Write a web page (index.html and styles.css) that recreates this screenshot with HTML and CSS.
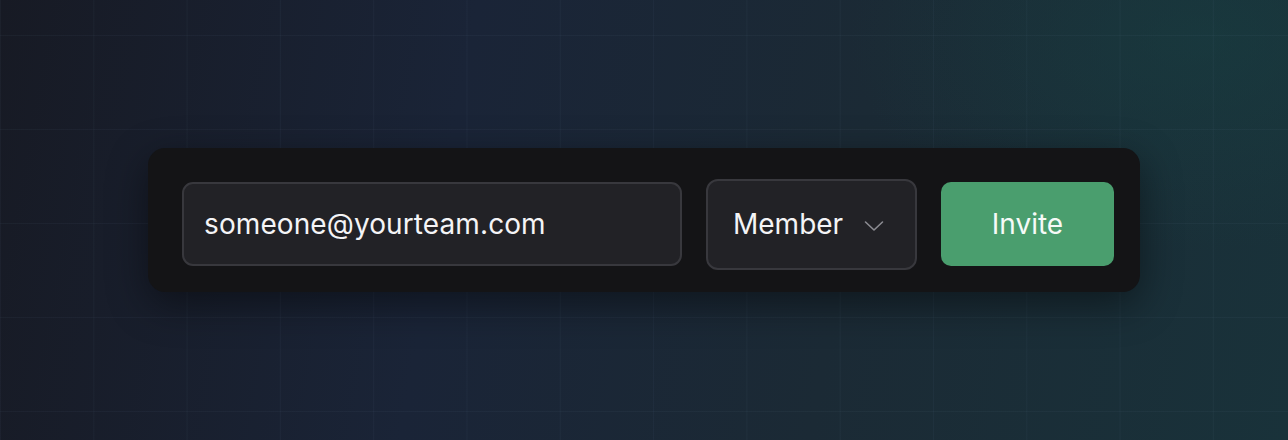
FILE: index.html
```html
<!DOCTYPE html>
<html>
<head>
<meta charset="utf-8">
<link rel="stylesheet" href="styles.css">
</head>
<body>
<div class="stage">
  <form class="card">
    <div class="field">someone@yourteam.com</div>
    <div class="select">
      <span>Member</span>
      <svg class="chev" width="20" height="12" viewBox="0 0 20 12"><path d="M1.5 2 L10 10 L18.5 2" fill="none" stroke="#8c8c92" stroke-width="1.6" stroke-linecap="round" stroke-linejoin="round"/></svg>
    </div>
    <div class="btn">Invite</div>
  </form>
</div>
</body>
</html>
```

FILE: styles.css
```css
html, body {
  margin: 0;
  padding: 0;
  width: 1288px;
  height: 440px;
  overflow: hidden;
}
body {
  font-family: Inter, "Noto Sans", sans-serif;
}
.stage {
  width: 1288px;
  height: 440px;
  box-sizing: border-box;
  padding-top: 148px;
  padding-left: 148px;
  background:
    linear-gradient(rgba(120,150,180,0.055) 1px, transparent 1px) 0 35px / 93px 94px,
    linear-gradient(90deg, rgba(120,150,180,0.055) 1px, transparent 1px) 0 0 / 93.3px 94px,
    radial-gradient(ellipse 500px 300px at 1200px 40px, rgba(24,64,66,0.5), transparent 70%),
    linear-gradient(100deg, #171a24 0%, #1a2437 35%, #1b2a35 65%, #19323a 100%);
}
.card {
  width: 992px;
  height: 144px;
  box-sizing: border-box;
  margin: 0;
  background: #141416;
  border-radius: 17px;
  padding: 34px 26px 26px 34px;
  display: flex;
  align-items: center;
  gap: 24px;
  box-shadow: 0 12px 40px rgba(0,0,0,0.45);
}
.field {
  width: 500px;
  height: 84px;
  box-sizing: border-box;
  background: #222226;
  border: 2px solid #38383d;
  border-radius: 11px;
  color: #f4f4f6;
  font-size: 28px;
  letter-spacing: 0.1px;
  display: flex;
  align-items: center;
  padding-left: 20px;
}
.select {
  width: 211px;
  height: 91px;
  box-sizing: border-box;
  background: #222226;
  border: 2px solid #38383d;
  border-radius: 12px;
  color: #f4f4f6;
  font-size: 28px;
  display: flex;
  align-items: center;
  padding-left: 25px;
}
.select span { flex: 1; }
.chev { margin-right: 31px; margin-top: 4px; }
.btn {
  width: 173px;
  height: 84px;
  background: #4a9e6e;
  border-radius: 10px;
  color: #f6faf7;
  font-size: 28px;
  display: flex;
  align-items: center;
  justify-content: center;
}
```
